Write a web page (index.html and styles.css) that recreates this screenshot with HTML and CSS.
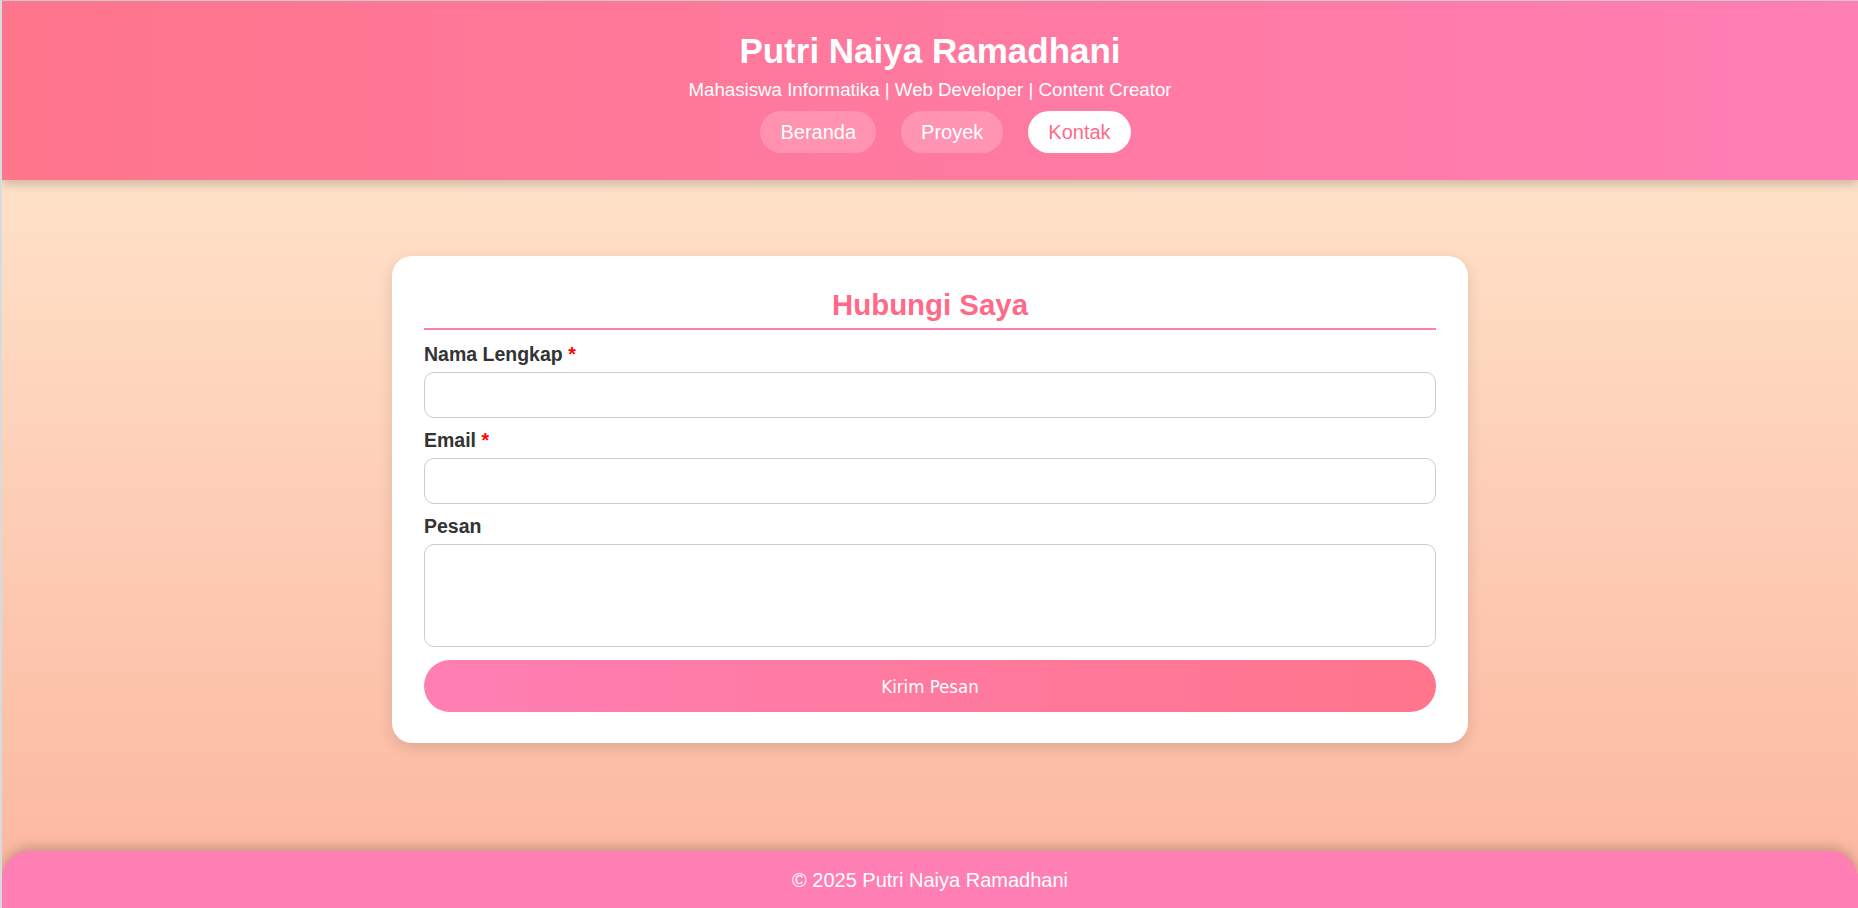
FILE: index.html
```html
<!DOCTYPE html>
<html lang="id">
<head>
<meta charset="utf-8">
<title>Kontak - Putri Naiya Ramadhani</title>
<link rel="stylesheet" href="styles.css">
</head>
<body class="page">
  <header class="site-header">
    <h1 class="site-title">Putri Naiya Ramadhani</h1>
    <p class="site-tagline">Mahasiswa Informatika | Web Developer | Content Creator</p>
    <nav class="site-nav">
      <a class="nav-link" href="#">Beranda</a>
      <a class="nav-link" href="#">Proyek</a>
      <a class="nav-link nav-link-active" href="#">Kontak</a>
    </nav>
  </header>
  <main class="main">
    <section class="card">
      <h2 class="card-title">Hubungi Saya</h2>
      <form class="contact-form">
        <label class="field-label" for="nama">Nama Lengkap <span class="req">*</span></label>
        <input class="field-input" id="nama" type="text">
        <label class="field-label" for="email">Email <span class="req">*</span></label>
        <input class="field-input" id="email" type="email">
        <label class="field-label" for="pesan">Pesan</label>
        <textarea class="field-input field-textarea" id="pesan"></textarea>
        <button class="submit-btn" type="button">Kirim Pesan</button>
      </form>
    </section>
  </main>
  <footer class="site-footer">© 2025 Putri Naiya Ramadhani</footer>
</body>
</html>
```
FILE: styles.css
```css
* { box-sizing: border-box; }
html, body { margin: 0; padding: 0; }
.page {
  min-height: 100vh;
  display: flex;
  flex-direction: column;
  border-top: 1px solid #c9c9c9;
  border-left: 2px solid #d6dcdc;
  font-family: "Liberation Sans", Arial, sans-serif;
  background: linear-gradient(to bottom, #ffecd2, #fcb69f);
  overflow: hidden;
}
.site-header {
  background: linear-gradient(to right, #ff758c, #ff7eb3);
  color: #fff;
  text-align: center;
  padding: 30px 0 27px;
  box-shadow: 0 4px 10px rgba(0,0,0,0.2);
  position: relative;
  z-index: 1;
}
.site-title {
  margin: 0;
  font-size: 35px;
  line-height: 40px;
  font-weight: bold;
}
.site-tagline {
  margin: 8px 0 0;
  font-size: 18.7px;
  line-height: 22px;
}
.site-nav {
  margin-top: 10px;
  padding-left: 31px;
  display: flex;
  justify-content: center;
  gap: 25px;
}
.nav-link {
  display: block;
  padding: 10px 20px;
  line-height: 22px;
  font-size: 20px;
  color: #fff;
  text-decoration: none;
  border-radius: 25px;
  background: rgba(255,255,255,0.2);
}
.nav-link-active {
  background: #fff;
  color: #ff6a88;
}
.main {
  flex: 1;
  padding-top: 76px;
  display: flex;
  justify-content: center;
  align-items: flex-start;
}
.card {
  width: 1076px;
  background: #fff;
  border-radius: 20px;
  padding: 32px 32px 31px;
  box-shadow: 0 5px 15px rgba(0,0,0,0.12);
}
.card-title {
  margin: 0 0 13px;
  text-align: center;
  color: #ff6a88;
  font-size: 29.4px;
  line-height: 34px;
  padding-bottom: 6px;
  border-bottom: 2px solid #ff7eb3;
}
.contact-form { display: flex; flex-direction: column; }
.field-label {
  display: block;
  font-size: 19.5px;
  line-height: 22px;
  font-weight: bold;
  color: #333;
  margin-bottom: 7px;
}
.req { color: #ff0000; }
.field-input {
  display: block;
  width: 100%;
  height: 46px;
  border: 1px solid #ccc;
  border-radius: 10px;
  margin: 0 0 11px;
  font-family: inherit;
  font-size: 16px;
  padding: 8px 12px;
  background: #fff;
}
.field-textarea {
  height: 103px;
  resize: none;
  margin-bottom: 13px;
}
.submit-btn {
  display: block;
  width: 100%;
  height: 52px;
  border: none;
  border-radius: 26px;
  background: linear-gradient(to right, #ff7eb3, #ff758c);
  color: #fff;
  font-family: "DejaVu Sans Condensed", "DejaVu Sans", sans-serif;
  font-stretch: condensed;
  font-size: 18.5px;
  cursor: pointer;
}
.site-footer {
  background: #ff7eb3;
  color: #fff;
  text-align: center;
  font-size: 20px;
  line-height: 23px;
  padding: 18px 0 16px;
  border-radius: 28px 28px 0 0;
  box-shadow: 0 -4px 12px rgba(0,0,0,0.2);
}
```
